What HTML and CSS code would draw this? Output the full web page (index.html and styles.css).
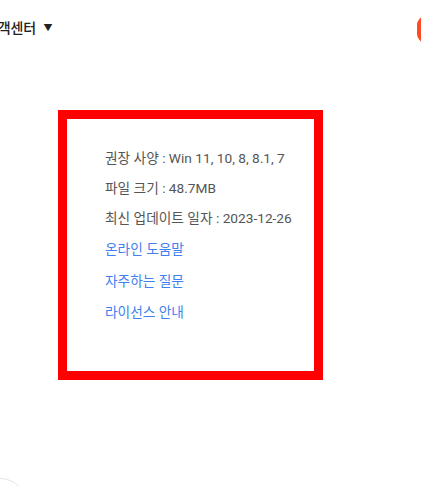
FILE: index.html
```html
<!DOCTYPE html>
<html lang="ko">
<head>
<meta charset="utf-8">
<link rel="stylesheet" href="styles.css">
</head>
<body>
<div class="page">
  <header class="topbar">
    <div class="menu">고객센터 <span class="caret">▼</span></div>
    <div class="cta">다운로드</div>
  </header>
  <main class="main">
    <section class="infobox">
      <p class="info">권장 사양 : Win 11, 10, 8, 8.1, 7</p>
      <p class="info">파일 크기 : 48.7MB</p>
      <p class="info">최신 업데이트 일자 : 2023-12-26</p>
      <a class="link first" href="#">온라인 도움말</a>
      <a class="link" href="#">자주하는 질문</a>
      <a class="link" href="#">라이선스 안내</a>
    </section>
  </main>
  <div class="floatbtn"></div>
</div>
</body>
</html>
```
FILE: styles.css
```css
html, body {
  margin: 0;
  padding: 0;
  background: #ffffff;
  overflow: hidden;
}
body {
  width: 421px;
  height: 486px;
  font-family: Roboto, "Noto Sans CJK KR", "Noto Sans", sans-serif;
}
.page {
  position: relative;
  width: 421px;
  height: 486px;
  overflow: hidden;
}
.topbar {
  display: flex;
  justify-content: space-between;
  align-items: center;
  height: 27px;
  padding-top: 16px;
}
.menu {
  margin-left: -15px;
  margin-top: -5px;
  font-size: 14px;
  font-weight: 500;
  color: #222222;
  white-space: nowrap;
  letter-spacing: -0.1px;
}
.caret {
  font-size: 9px;
  margin-left: 4px;
  vertical-align: 2px;
}
.cta {
  width: 80px;
  height: 27px;
  margin-right: -76px;
  background: #ff4b23;
  border-radius: 9px;
  color: transparent;
  flex: none;
}
.main {
  padding-left: 58px;
  padding-top: 67px;
}
.infobox {
  box-sizing: border-box;
  width: 265px;
  height: 270px;
  border: 9px solid #ff0000;
  padding: 24px 0 0 38px;
  display: flex;
  flex-direction: column;
}
.info, .link {
  margin: 0;
  font-size: 13.7px;
  white-space: nowrap;
}
.info {
  color: #555555;
  line-height: 30px;
  height: 30px;
}
.link {
  color: #3f7ff0;
  text-decoration: none;
  line-height: 31.5px;
  height: 31.5px;
}
.link.first {
  margin-top: 1px;
}
.floatbtn {
  position: absolute;
  left: -27px;
  top: 478px;
  width: 52px;
  height: 52px;
  border: 1px solid #e3e3e3;
  border-radius: 50%;
  background: #fff;
}
```
